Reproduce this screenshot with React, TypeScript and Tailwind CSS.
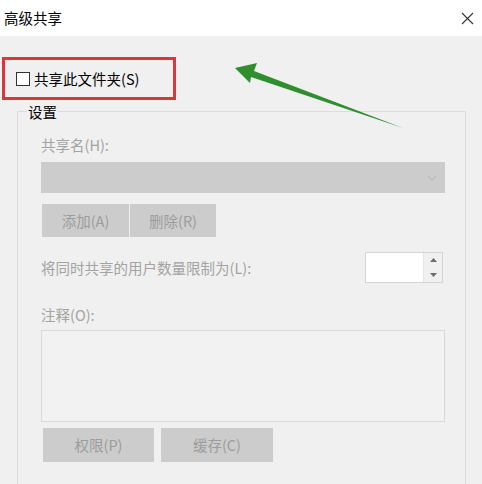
import React from "react";

const font = { fontFamily: '"Noto Sans CJK SC", "Noto Sans", sans-serif' };

const GrayButton: React.FC<{ label: string; w: string }> = ({ label, w }) => (
  <div
    className={`${w} h-full flex items-center justify-center bg-[#cccccc] text-[#9c9c9c] text-[14.5px]`}
  >
    {label}
  </div>
);

export default function App() {
  return (
    <div
      className="relative w-[482px] h-[484px] overflow-hidden bg-[#f0f0f0] text-[14.5px] leading-[20px]"
      style={font}
    >
      {/* Title bar */}
      <div className="h-[36px] bg-white flex items-center justify-between pl-[4px] pr-[8px]">
        <span className="text-[14.5px] text-black">高级共享</span>
        <svg width="13" height="13" viewBox="0 0 13 13">
          <path d="M1 1 L12 12 M12 1 L1 12" stroke="#333" strokeWidth="1.1" fill="none" />
        </svg>
      </div>

      {/* Share checkbox (highlighted) */}
      <div className="mt-[21px] ml-[2px] w-[174px] h-[43px] border-[3px] border-[#d9373f] flex items-center pl-[11px]">
        <div className="w-[14px] h-[14px] border border-[#333] bg-white" />
        <span className="ml-[4px] text-black">共享此文件夹(S)</span>
      </div>

      {/* Settings group */}
      <div className="mt-[11px] ml-[17px] w-[449px] h-[400px] border border-[#dcdcdc] pl-[23px] pr-[20px]">
        <div className="-mt-[10px] -ml-[14px] w-fit px-[1px] bg-[#f0f0f0] text-black">设置</div>

        <div className="mt-[13px] text-[#a3a3a3]">共享名(H):</div>
        <div className="mt-[7px] h-[31px] bg-[#cccccc] flex items-center justify-end pr-[8px]">
          <svg width="10" height="6" viewBox="0 0 10 6">
            <path d="M0.5 0.5 L5 5 L9.5 0.5" stroke="#b4b4b4" strokeWidth="1" fill="none" />
          </svg>
        </div>

        <div className="mt-[11px] h-[33px] flex gap-[1px] pl-[1px]">
          <GrayButton label="添加(A)" w="w-[87px]" />
          <GrayButton label="删除(R)" w="w-[86px]" />
        </div>

        <div className="mt-[15px] h-[31px] flex items-center justify-between pr-[2px]">
          <span className="text-[#a3a3a3]">将同时共享的用户数量限制为(L):</span>
          <div className="w-[78px] h-full border border-[#d4d4d4] bg-white flex">
            <div className="flex-1" />
            <div className="w-[19px] flex flex-col bg-[#f0f0f0] border-l border-[#e4e4e4]">
              <div className="flex-1 flex items-center justify-center">
                <svg width="7" height="4" viewBox="0 0 7 4">
                  <path d="M0 4 L3.5 0 L7 4 Z" fill="#6b6b6b" />
                </svg>
              </div>
              <div className="flex-1 flex items-center justify-center">
                <svg width="7" height="4" viewBox="0 0 7 4">
                  <path d="M0 0 L3.5 4 L7 0 Z" fill="#6b6b6b" />
                </svg>
              </div>
            </div>
          </div>
        </div>

        <div className="mt-[22px] text-[#a3a3a3]">注释(O):</div>
        <div className="mt-[5px] h-[92px] border border-[#d9d9d9] bg-[#f2f2f2]" />

        <div className="mt-[6px] h-[34px] flex gap-[7px] pl-[2px]">
          <GrayButton label="权限(P)" w="w-[111px]" />
          <GrayButton label="缓存(C)" w="w-[112px]" />
        </div>
      </div>

      {/* Annotation arrow */}
      <svg
        className="absolute left-0 top-0 pointer-events-none"
        width="482"
        height="484"
        viewBox="0 0 482 484"
      >
        <polygon
          points="235,68 257,63 254,71 403,128 251,77 250,83"
          fill="#2f8f2f"
        />
      </svg>
    </div>
  );
}
